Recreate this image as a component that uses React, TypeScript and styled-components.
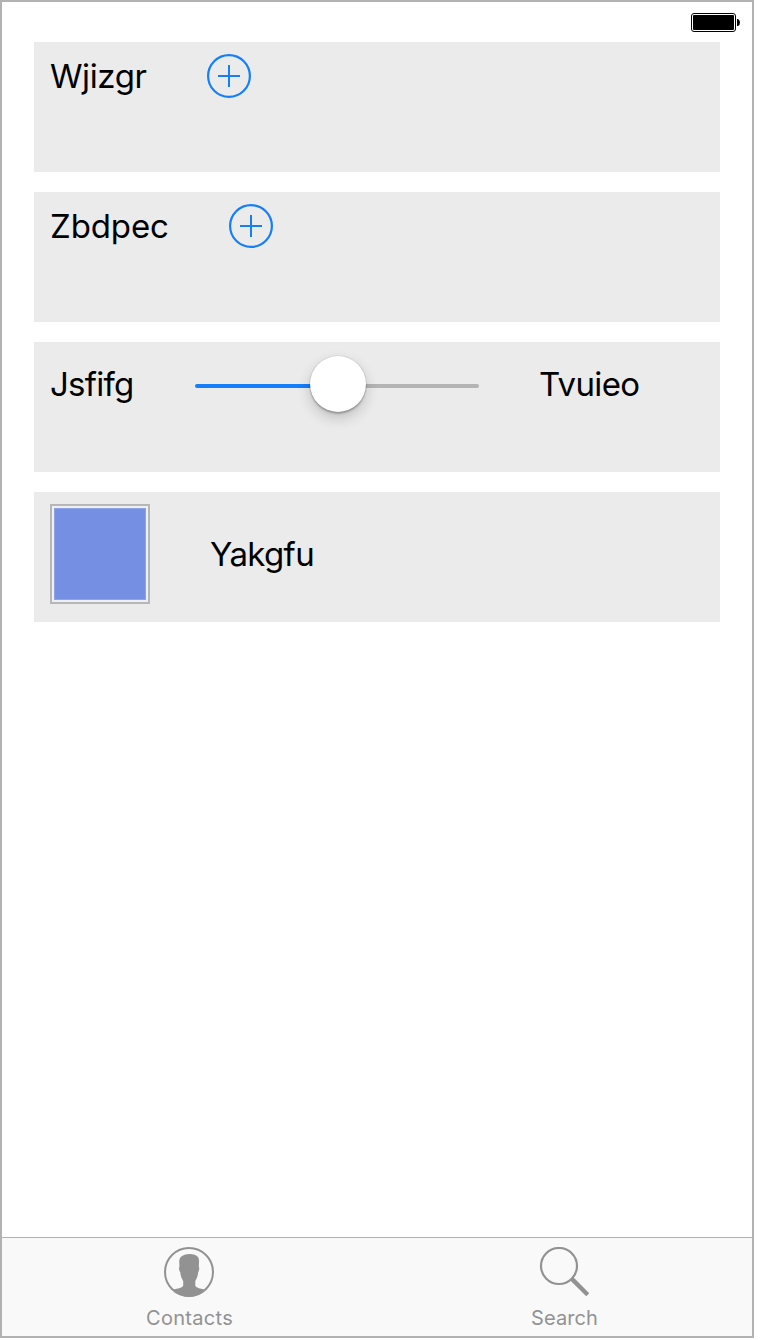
import React from "react";
import styled, { createGlobalStyle } from "styled-components";

const GlobalStyle = createGlobalStyle`
  * { box-sizing: border-box; }
  body { margin: 0; background: #fff; font-family: Inter, "Liberation Sans", sans-serif; }
`;

const Screen = styled.div`
  display: flex;
  flex-direction: column;
  width: 754px;
  height: 1338px;
  border: 2px solid #b2b2b2;
  background: #fff;
`;

const StatusBar = styled.header`
  display: flex;
  justify-content: flex-end;
  height: 40px;
  padding: 11px 12px 0 0;
`;

const Content = styled.main`
  flex: 1;
  display: flex;
  flex-direction: column;
  gap: 20px;
  padding: 0 32px;
`;

const Card = styled.section`
  display: flex;
  align-items: center;
  align-content: flex-start;
  flex-wrap: wrap;
  gap: 60px;
  height: 130px;
  padding: 12px 16px;
  background: #ebebeb;
`;

const Label = styled.span<{ $width: number; $spacing: number }>`
  width: ${(p) => p.$width}px;
  font-size: 33px;
  line-height: 44px;
  letter-spacing: ${(p) => p.$spacing}px;
  white-space: nowrap;
  color: #000;
`;

const AddButton = styled.button`
  display: flex;
  padding: 0;
  border: 0;
  background: none;
  color: #147efb;
`;

const Slider = styled.div`
  display: grid;
  align-items: center;
  width: 284px;
  height: 60px;
`;

const Track = styled.div`
  grid-area: 1 / 1;
  height: 4px;
  margin-top: 4px;
  border-radius: 2px;
  background: linear-gradient(to right, #147efb 50%, #b4b4b4 50%);
`;

const Thumb = styled.div`
  grid-area: 1 / 1;
  justify-self: center;
  width: 56px;
  height: 56px;
  margin-left: 2px;
  border-radius: 50%;
  background: #fff;
  box-shadow: 0 0 1px 0.5px rgba(0, 0, 0, 0.12), 0 2px 2px rgba(0, 0, 0, 0.22), 0 6px 14px rgba(0, 0, 0, 0.19);
`;

const Swatch = styled.div`
  width: 100px;
  height: 100px;
  padding: 2px;
  border: 2px solid #b7b7b7;
  background: #758fe2 content-box;
  box-shadow: inset 0 0 0 2px #eef0f7, inset 0 0 0 3px #8da2e8;
`;

const TabBar = styled.nav`
  display: grid;
  grid-template-columns: 1fr 1fr;
  height: 99px;
  border-top: 1px solid #b2b2b2;
  background: #f9f9f9;
`;

const Tab = styled.a`
  display: flex;
  flex-direction: column;
  align-items: center;
  padding: 9px 1px 0 0;
  color: #929292;
`;

const TabLabel = styled.span<{ $spacing: number }>`
  margin-top: 8px;
  padding-left: 1px;
  font-size: 20px;
  line-height: 26px;
  letter-spacing: ${(p) => p.$spacing}px;
`;

const BatteryIcon = () => (
  <svg width="49" height="19" viewBox="0 0 49 19">
    <rect x="0.5" y="0.5" width="44" height="18" rx="2.5" fill="#fff" stroke="#000" />
    <rect x="2" y="2" width="41" height="15" rx="1" />
    <path d="M46 6h1q2 1 2 3.5T47 13h-1z" />
  </svg>
);

const PlusIcon = () => (
  <svg width="44" height="44" viewBox="0 0 44 44" fill="none" stroke="currentColor" strokeWidth="2">
    <circle cx="22" cy="22" r="20.9" strokeWidth="2.2" />
    <path d="M22 11v22M11 22h22" />
  </svg>
);

const ContactsIcon = () => (
  <svg width="50" height="50" viewBox="0 0 50 50">
    <circle cx="25" cy="25" r="24" fill="none" stroke="currentColor" strokeWidth="2" />
    <path
      fill="currentColor"
      d="M25.5 7C29 7 32.5 8.2 34.2 10.2C35.6 12.5 34.9 16.5 34.8 19.5C35.6 20.5 35.2 23.8 34.2 25C33.9 28.5 32.8 31.5 31.3 34V38.5C31.8 41 36 41.3 41 42.8C37 47.3 31 50 25 50S13 47.3 9 42.8C14 41.3 18.6 41 19.2 38.5V34C17.6 31.5 16.5 28.5 16.2 25C15 23.8 14.6 20.5 15.5 19.5C15.2 15.5 14.8 12 16.8 10C18.8 8 22 7 25.5 7Z"
    />
  </svg>
);

const SearchIcon = () => (
  <svg width="50" height="50" viewBox="0 0 50 50" fill="none" stroke="currentColor">
    <circle cx="20" cy="19" r="18" strokeWidth="2.2" />
    <path d="M32.6 31.6L48.8 47.8" strokeWidth="4.4" />
  </svg>
);

export default function App() {
  return (
    <>
      <GlobalStyle />
      <Screen>
        <StatusBar>
          <BatteryIcon />
        </StatusBar>
        <Content>
          <Card>
            <Label $width={97} $spacing={-0.4}>Wjizgr</Label>
            <AddButton aria-label="Add"><PlusIcon /></AddButton>
          </Card>
          <Card>
            <Label $width={119} $spacing={-0.1}>Zbdpec</Label>
            <AddButton aria-label="Add"><PlusIcon /></AddButton>
          </Card>
          <Card>
            <Label $width={85} $spacing={-0.75}>Jsfifg</Label>
            <Slider>
              <Track />
              <Thumb />
            </Slider>
            <Label $width={101} $spacing={-0.65}>Tvuieo</Label>
          </Card>
          <Card>
            <Swatch />
            <Label $width={105} $spacing={-0.65}>Yakgfu</Label>
          </Card>
        </Content>
        <TabBar>
          <Tab>
            <ContactsIcon />
            <TabLabel $spacing={0.3}>Contacts</TabLabel>
          </Tab>
          <Tab>
            <SearchIcon />
            <TabLabel $spacing={0.1}>Search</TabLabel>
          </Tab>
        </TabBar>
      </Screen>
    </>
  );
}
